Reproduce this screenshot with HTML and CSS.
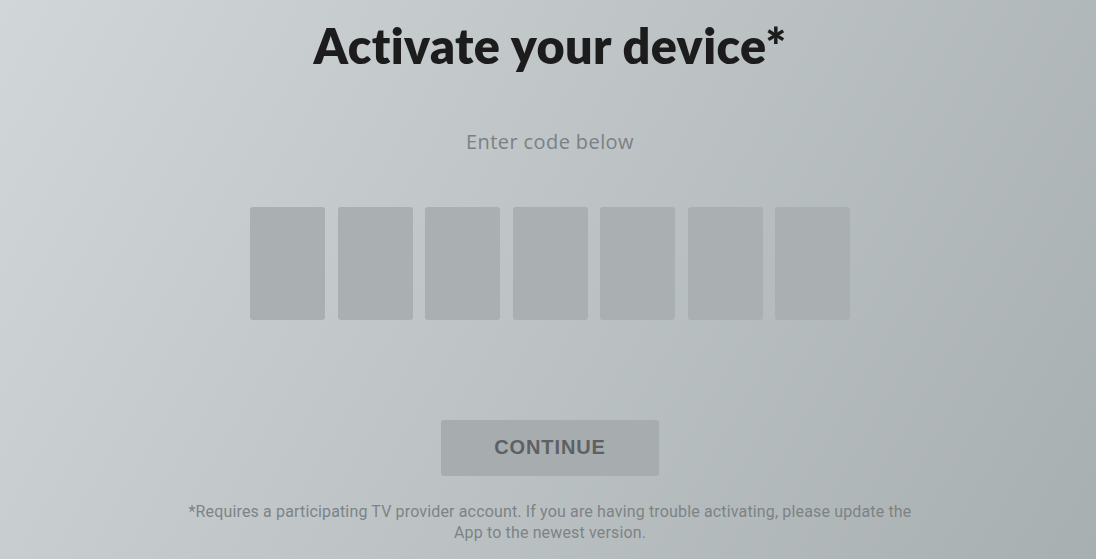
FILE: index.html
```html
<!DOCTYPE html>
<html lang="en">
<head>
<meta charset="utf-8">
<title>Activate your device</title>
<link rel="stylesheet" href="styles.css">
</head>
<body>
<main class="activate">
  <h1 class="activate-title">Activate your device*</h1>
  <p class="activate-hint">Enter code below</p>
  <div class="code-row">
    <input class="code-cell" type="text" maxlength="1" aria-label="Code character 1">
    <input class="code-cell" type="text" maxlength="1" aria-label="Code character 2">
    <input class="code-cell" type="text" maxlength="1" aria-label="Code character 3">
    <input class="code-cell" type="text" maxlength="1" aria-label="Code character 4">
    <input class="code-cell" type="text" maxlength="1" aria-label="Code character 5">
    <input class="code-cell" type="text" maxlength="1" aria-label="Code character 6">
    <input class="code-cell" type="text" maxlength="1" aria-label="Code character 7">
  </div>
  <button class="continue-btn" type="button" disabled>CONTINUE</button>
  <p class="activate-note">*Requires a participating TV provider account. If you are having trouble activating, please update the App to the newest version.</p>
</main>
</body>
</html>
```

FILE: styles.css
```css
html, body {
  margin: 0;
  height: 100%;
}

body {
  background: linear-gradient(120deg, #d1d6d9 0%, #bfc5c7 45%, #a8afb1 100%);
  font-family: "Lato", "Noto Sans", sans-serif;
  overflow: hidden;
}

.activate {
  display: flex;
  flex-direction: column;
  align-items: center;
  padding: 17px 0 0 4px;
}

.activate-title {
  margin: 0;
  font-size: 48.5px;
  font-weight: 800;
  line-height: 56px;
  color: #1c1c1d;
  letter-spacing: 0.4px;
}

.activate-hint {
  margin: 57px 0 0;
  font-family: "Open Sans", sans-serif;
  font-size: 20px;
  line-height: 24px;
  letter-spacing: 0.4px;
  color: #7b8183;
}

.code-row {
  display: flex;
  gap: 12.5px;
  margin-top: 53px;
}

.code-cell {
  width: 75px;
  height: 113px;
  box-sizing: border-box;
  border: none;
  border-radius: 3px;
  background: #aaafb2;
  padding: 0;
  outline: none;
}

.continue-btn {
  margin-top: 100px;
  width: 218px;
  height: 56px;
  padding: 0 0 1px;
  border: none;
  border-radius: 3px;
  background: #a7acae;
  color: #5e6163;
  font-family: "Liberation Sans", Arial, sans-serif;
  font-size: 20px;
  font-weight: 700;
  letter-spacing: 0.9px;
}

.activate-note {
  margin: 25px 0 0;
  max-width: 740px;
  text-align: center;
  font-family: "Roboto", sans-serif;
  font-size: 16px;
  line-height: 21px;
  letter-spacing: 0.15px;
  color: #7d8385;
}
```
